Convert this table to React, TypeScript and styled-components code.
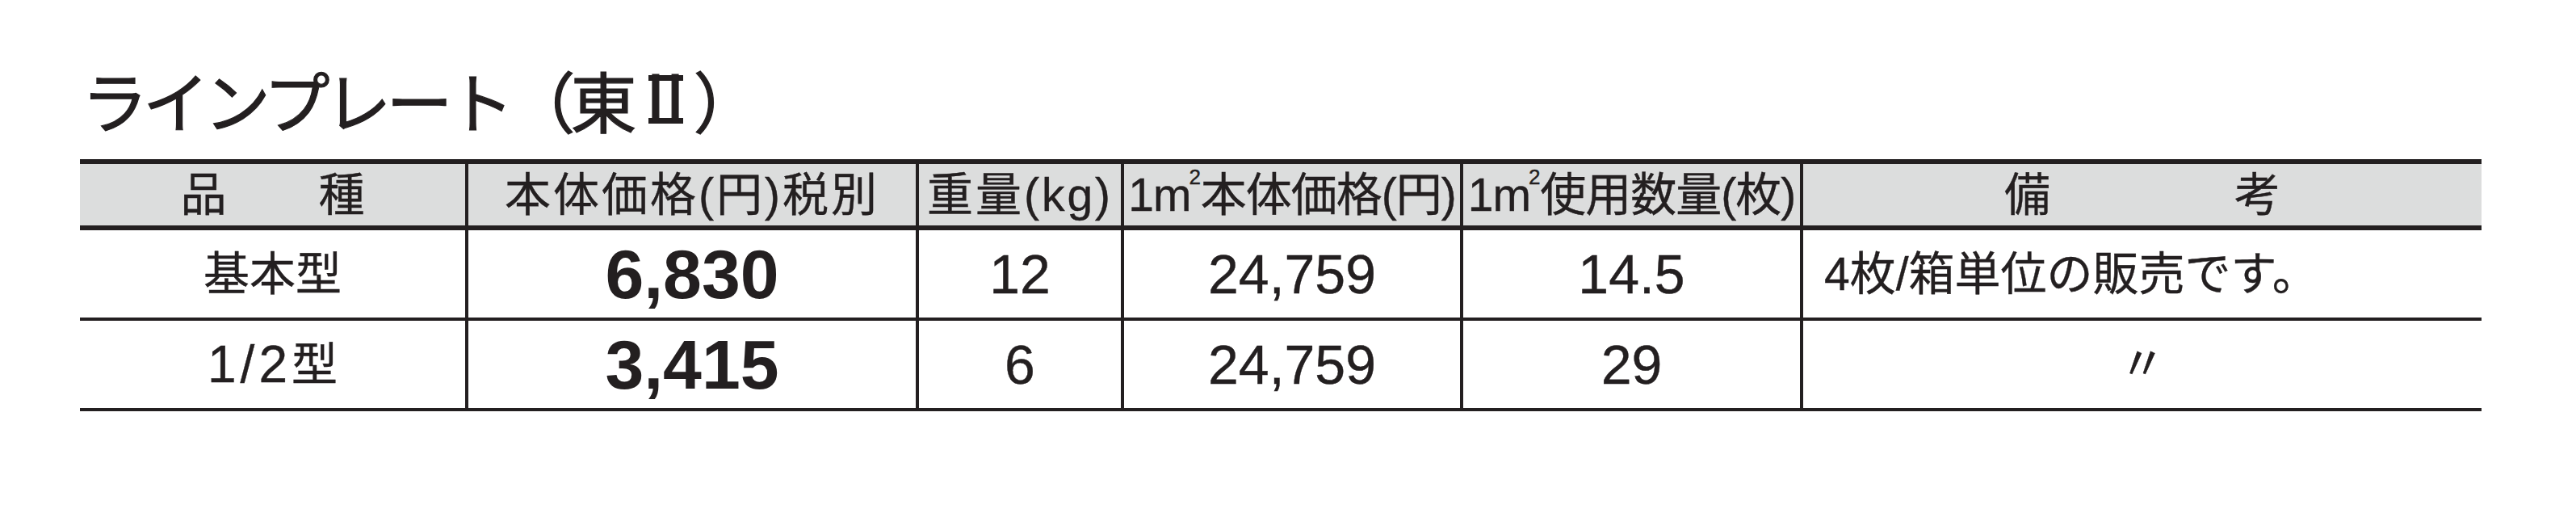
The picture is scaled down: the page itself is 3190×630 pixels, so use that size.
import React from "react";
import styled, { createGlobalStyle } from "styled-components";

const INK = "#231f20";

const Global = createGlobalStyle`
  html, body { margin: 0; padding: 0; background: #ffffff; }
  body {
    font-family: "Liberation Sans", "Noto Sans CJK JP", sans-serif;
    color: ${INK};
  }
`;

const Page = styled.div`
  width: 3190px;
  height: 630px;
  box-sizing: border-box;
  padding: 82px 0 0 99px;
  overflow: hidden;
`;

const Title = styled.h1`
  margin: 0 0 33px 2px;
  height: 82px;
  font-family: "Noto Sans CJK JP", sans-serif;
  font-weight: 400;
  font-size: 82px;
  line-height: 82px;
  letter-spacing: -6px;
  white-space: nowrap;
  -webkit-text-stroke: 1.2px ${INK};
`;

/* Roman numeral Ⅱ drawn with top and bottom bars, as in the printed title */
const Roman = styled.span`
  display: inline-flex;
  justify-content: center;
  align-items: flex-start;
  vertical-align: top;
  box-sizing: border-box;
  width: 43px;
  height: 60px;
  margin: 11px 13px 0 20px;
  border-top: 7px solid ${INK};
  border-bottom: 7px solid ${INK};
  letter-spacing: 0;
  & > span {
    display: block;
    flex: none;
    margin-top: -24px;
  }
`;

const Table = styled.div`
  width: 2974px;
  border-top: 6px solid ${INK};
`;

const Row = styled.div<{ $head?: boolean }>`
  display: grid;
  grid-template-columns: 477px 558px 254px 420px 421px 844px;
  box-sizing: border-box;
  height: ${(p) => (p.$head ? 82 : 112)}px;
  border-bottom: ${(p) => (p.$head ? 6 : 4)}px solid ${INK};
  background: ${(p) => (p.$head ? "#dcdddd" : "#ffffff")};
`;

const Cell = styled.div<{ $align?: "left" | "center"; $spacing?: number }>`
  display: flex;
  align-items: center;
  justify-content: ${(p) => (p.$align === "left" ? "flex-start" : "center")};
  padding-left: ${(p) => (p.$align === "left" ? 26 : 0)}px;
  box-sizing: border-box;
  font-size: 57px;
  line-height: 1;
  letter-spacing: ${(p) => p.$spacing ?? 0}px;
  white-space: nowrap;
  -webkit-text-stroke: 0.4px ${INK};
  &:not(:first-child) {
    border-left: 4px solid ${INK};
  }
`;

const Sup = styled.span`
  font-size: 26px;
  display: inline-block;
  transform: translateY(-22px);
  margin-left: -2px;
  letter-spacing: 0;
`;

const Price = styled.span`
  font-family: "Liberation Sans", sans-serif;
  font-weight: 700;
  font-size: 86px;
  line-height: 1;
  -webkit-text-stroke: 0;
`;

const Num = styled.span`
  font-family: "Liberation Sans", sans-serif;
  font-size: 68px;
  line-height: 1;
`;

const Fraction = styled.span`
  font-size: 64px;
  letter-spacing: 5px;
`;

const Ditto = styled.span`
  font-family: "Noto Sans CJK JP", sans-serif;
  font-size: 57px;
  line-height: 1;
  margin-bottom: 12px;
`;

type Item = {
  name: React.ReactNode;
  price: string;
  weight: string;
  perSqm: string;
  count: string;
  note: React.ReactNode;
  noteAlign: "left" | "center";
};

const items: Item[] = [
  {
    name: "基本型",
    price: "6,830",
    weight: "12",
    perSqm: "24,759",
    count: "14.5",
    note: "4枚/箱単位の販売です。",
    noteAlign: "left",
  },
  {
    name: (
      <>
        <Fraction>1/2</Fraction>型
      </>
    ),
    price: "3,415",
    weight: "6",
    perSqm: "24,759",
    count: "29",
    note: <Ditto>〃</Ditto>,
    noteAlign: "center",
  },
];

export default function App() {
  return (
    <>
      <Global />
      <Page>
        <Title>
          ラインプレート（東
          <Roman>
            <span>Ⅱ</span>
          </Roman>
          ）
        </Title>
        <Table>
          <Row $head>
            <Cell>品　　種</Cell>
            <Cell $spacing={3}>本体価格(円)税別</Cell>
            <Cell $spacing={3}>重量(kg)</Cell>
            <Cell $spacing={-1}>
              1m<Sup>2</Sup>本体価格(円)
            </Cell>
            <Cell $spacing={-1}>
              1m<Sup>2</Sup>使用数量(枚)
            </Cell>
            <Cell>備　　　　考</Cell>
          </Row>
          {items.map((it, i) => (
            <Row key={i}>
              <Cell>{it.name}</Cell>
              <Cell>
                <Price>{it.price}</Price>
              </Cell>
              <Cell>
                <Num>{it.weight}</Num>
              </Cell>
              <Cell>
                <Num>{it.perSqm}</Num>
              </Cell>
              <Cell>
                <Num>{it.count}</Num>
              </Cell>
              <Cell $align={it.noteAlign}>{it.note}</Cell>
            </Row>
          ))}
        </Table>
      </Page>
    </>
  );
}
